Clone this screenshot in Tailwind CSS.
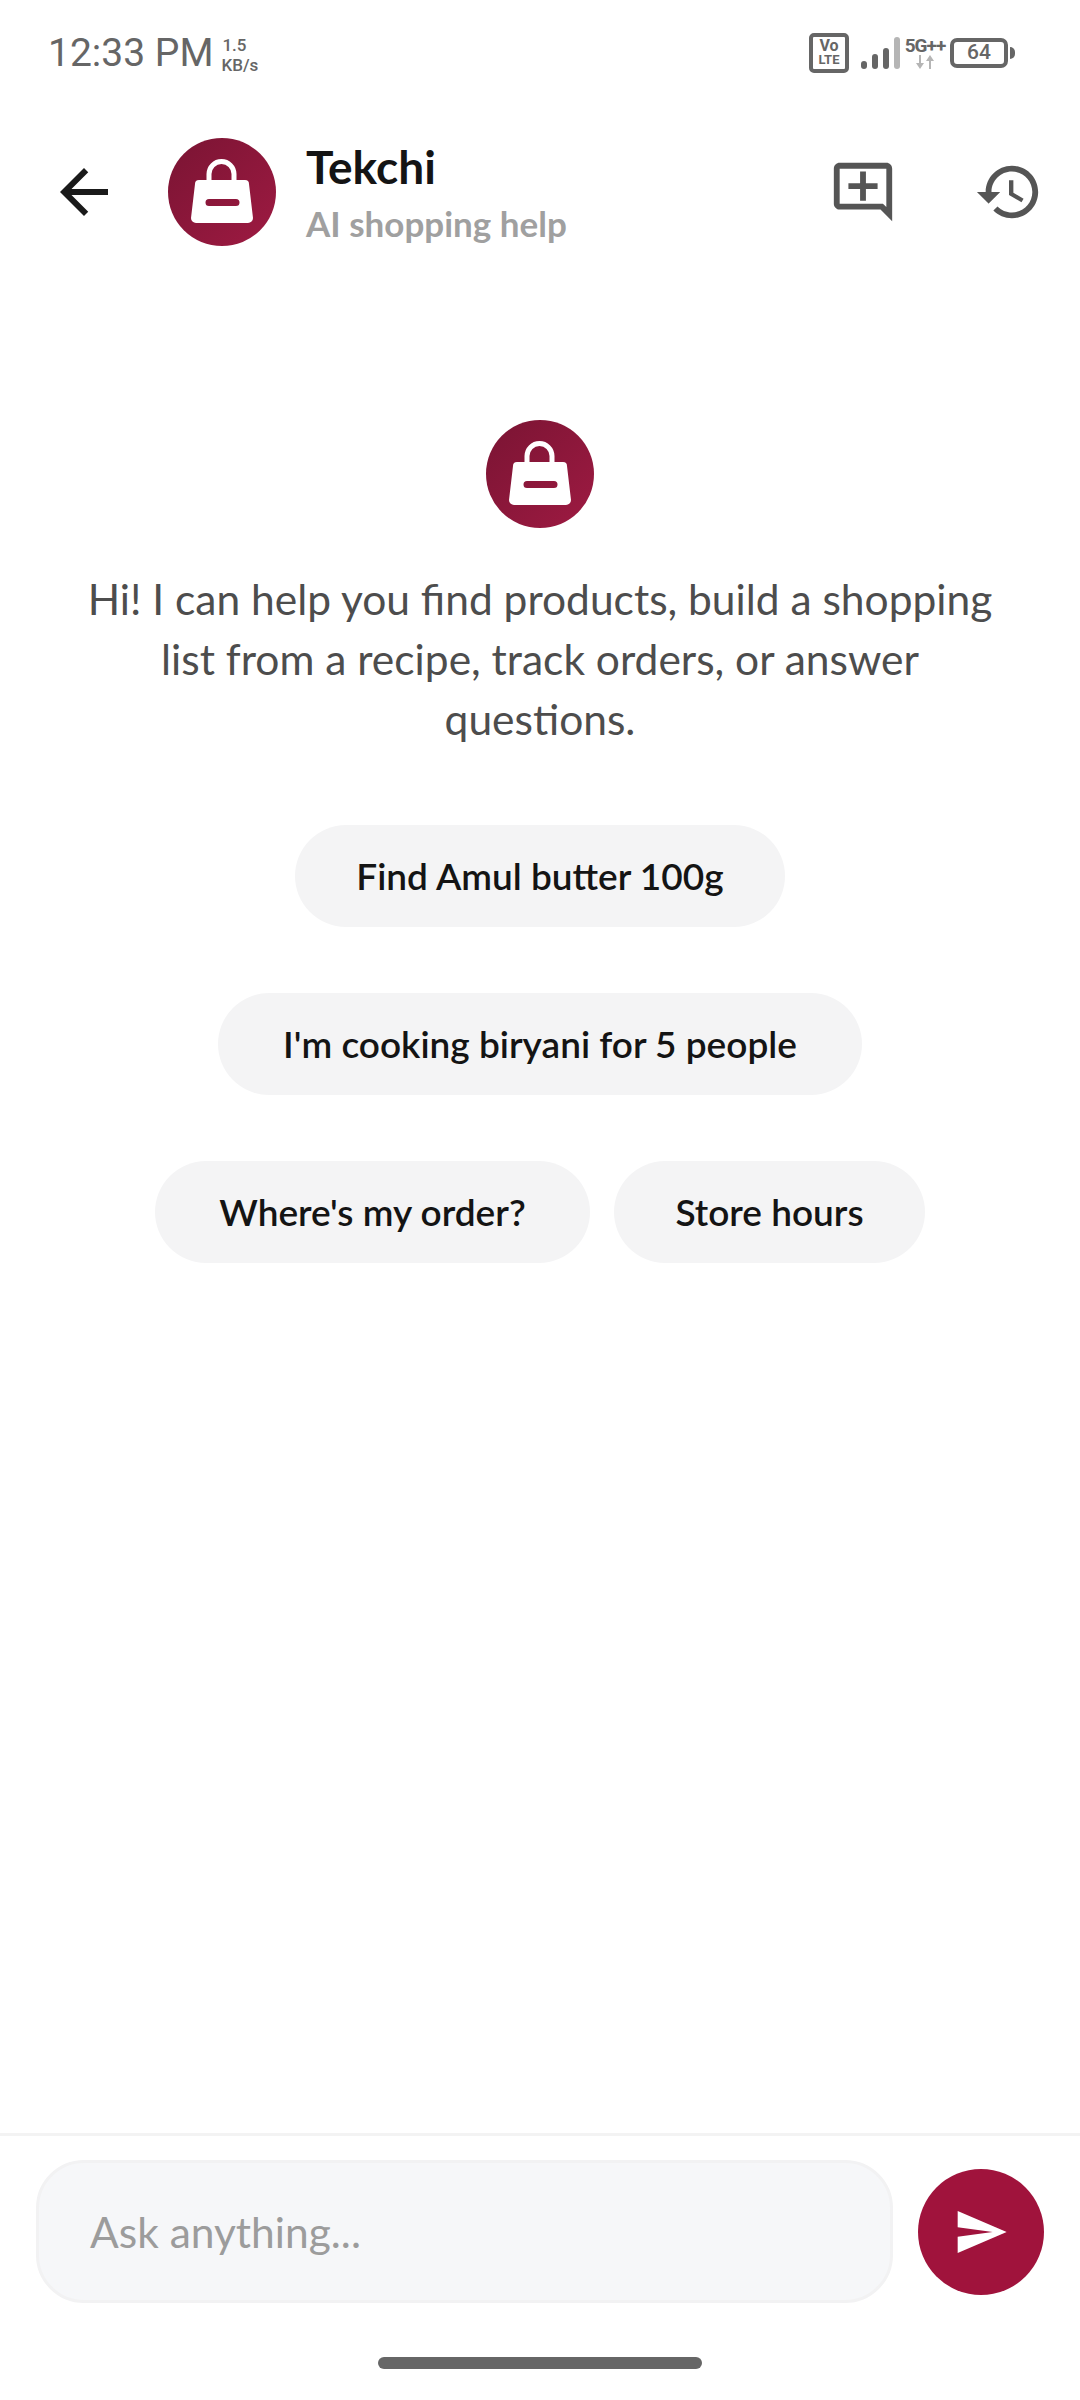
<!DOCTYPE html>
<html lang="en">
<head>
  <meta charset="UTF-8">
  <meta name="viewport" content="width=device-width, initial-scale=1.0">
  <title>Tekchi</title>
  <script src="https://cdn.jsdelivr.net/npm/@tailwindcss/browser@4"></script>
</head>
<body class="bg-white font-['Lato',sans-serif]">
  <div class="w-[1080px] h-[2400px] flex flex-col overflow-hidden">

    <!-- Status bar -->
    <div class="h-[105px] shrink-0 flex items-center justify-between pl-[48px] pr-[65px] font-['Roboto',sans-serif] text-[#666666]">
      <div class="flex items-center gap-[8px] mt-[2px]">
        <span class="text-[39px] leading-none">12:33 PM</span>
        <div class="flex flex-col items-start text-[17px] leading-[20px] font-medium pt-[3px]">
          <span class="pl-[1px]">1.5</span>
          <span>KB/s</span>
        </div>
      </div>
      <div class="flex items-center">
        <div class="w-[40px] h-[40px] border-[4px] border-[#666666] rounded-[5px] flex flex-col items-center justify-center font-bold">
          <span class="text-[16px] leading-[15px]">Vo</span>
          <span class="text-[13px] leading-[14px]">LTE</span>
        </div>
        <div class="flex items-end gap-[5px] ml-[12px] h-[32px]">
          <div class="w-[6px] h-[8px] rounded-full bg-[#666666]"></div>
          <div class="w-[6px] h-[15px] rounded-full bg-[#666666]"></div>
          <div class="w-[6px] h-[21px] rounded-full bg-[#666666]"></div>
          <div class="w-[6px] h-[32px] rounded-full bg-[#b5b5b5]"></div>
        </div>
        <div class="flex flex-col items-center w-[40px] ml-[5px]">
          <span class="text-[19px] leading-[18px] font-bold tracking-[-1px]">5G++</span>
          <svg class="w-[20px] h-[14px]" viewBox="0 0 20 14" fill="#b5b5b5"><path d="M4 0h2v8h3l-4 6-4-6h3zM14 14h2V6h3l-4-6-4 6h3z"/></svg>
        </div>
        <div class="w-[58px] h-[30px] ml-[5px] border-[4px] border-[#666666] rounded-[7px] flex items-center justify-center text-[21px] font-medium">64</div>
        <div class="w-[5px] h-[12px] ml-[2px] rounded-r-full bg-[#666666]"></div>
      </div>
    </div>

    <!-- Header -->
    <header class="h-[108px] shrink-0 mt-[33px] flex items-center pl-[48px] pr-[36px]">
      <svg class="w-[72px] h-[72px] text-[#1a1a1a]" viewBox="0 0 24 24" fill="currentColor"><path d="M20 11H7.83l5.59-5.59L12 4l-8 8 8 8 1.41-1.41L7.83 13H20v-2z"/></svg>
      <div class="ml-[48px] w-[108px] h-[108px] rounded-full bg-linear-to-br from-[#7a1433] to-[#9e1a42]">
        <svg class="w-full h-full" viewBox="0 0 108 108"><path fill="none" stroke="#ffffff" stroke-width="5" d="M41 43V36a12.5 12.5 0 0 1 25 0V43"/><path fill="#ffffff" fill-rule="evenodd" d="M31 42H77a4 4 0 0 1 4 4l4 34a5 5 0 0 1-5 5H28a5 5 0 0 1-5-5l4-34a4 4 0 0 1 4-4zM41 61a3.500 3.500 0 0 0 0 7H68a3.500 3.500 0 0 0 0-7z"/></svg>
      </div>
      <div class="ml-[30px] pt-[2px] flex-1 flex flex-col">
        <span class="text-[46px] leading-[50px] font-bold text-[#141414]">Tekchi</span>
        <span class="mt-[9px] text-[35px] leading-[44px] font-bold text-[#a0a0a0]">AI shopping help</span>
      </div>
      <svg class="w-[70px] h-[70px] text-[#555555]" viewBox="0 0 24 24" fill="currentColor"><path d="M22 4c0-1.100-.9-2-2-2H4c-1.100 0-2 .9-2 2v12c0 1.100.9 2 2 2h14l4 4V4zm-2 13.170L18.830 16H4V4h16v13.170zM13 5h-2v4H7v2h4v4h2v-4h4V9h-4V5z"/></svg>
      <svg class="w-[70px] h-[70px] ml-[76px] text-[#555555]" viewBox="0 0 24 24" fill="currentColor"><path d="M13 3c-4.970 0-9 4.030-9 9H1l3.890 3.890.07.14L9 12H6c0-3.870 3.130-7 7-7s7 3.130 7 7-3.130 7-7 7c-1.930 0-3.680-.79-4.940-2.060l-1.420 1.420C8.270 19.990 10.510 21 13 21c4.970 0 9-4.030 9-9s-4.030-9-9-9zm-1 5v5l4.280 2.540.72-1.210-3.500-2.080V8H12z"/></svg>
    </header>

    <!-- Empty chat -->
    <main class="flex-1 flex flex-col items-center pt-[174px]">
      <div class="w-[108px] h-[108px] rounded-full bg-linear-to-br from-[#7a1433] to-[#9e1a42]">
        <svg class="w-full h-full" viewBox="0 0 108 108"><path fill="none" stroke="#ffffff" stroke-width="5" d="M41 43V36a12.5 12.5 0 0 1 25 0V43"/><path fill="#ffffff" fill-rule="evenodd" d="M31 42H77a4 4 0 0 1 4 4l4 34a5 5 0 0 1-5 5H28a5 5 0 0 1-5-5l4-34a4 4 0 0 1 4-4zM41 61a3.500 3.500 0 0 0 0 7H68a3.500 3.500 0 0 0 0-7z"/></svg>
      </div>
      <p class="mt-[41px] w-[960px] text-center text-[42.5px] leading-[60px] text-[#4d4d4d]">Hi! I can help you find products, build a shopping<br>list from a recipe, track orders, or answer<br>questions.</p>
      <div class="mt-[76px] flex flex-col items-center gap-[66px] text-[37px] font-semibold text-[#141414]">
        <div class="h-[102px] w-[490px] flex items-center justify-center rounded-full bg-[#f4f4f5]">Find Amul butter 100g</div>
        <div class="h-[102px] w-[644px] flex items-center justify-center rounded-full bg-[#f4f4f5]">I'm cooking biryani for 5 people</div>
        <div class="flex gap-[24px]">
          <div class="h-[102px] w-[435px] flex items-center justify-center rounded-full bg-[#f4f4f5]">Where's my order?</div>
          <div class="h-[102px] w-[311px] flex items-center justify-center rounded-full bg-[#f4f4f5]">Store hours</div>
        </div>
      </div>
    </main>

    <!-- Composer -->
    <footer class="h-[267px] shrink-0 border-t-[3px] border-[#f3f3f3] pt-[24px] pl-[36px] pr-[36px]">
      <div class="flex items-center gap-[25px]">
        <div class="w-[858px] h-[143px] flex items-center pl-[51px] rounded-[48px] bg-[#f6f7f9] border-[3px] border-[#f2f2f3] text-[42.5px] text-[#9c9c9c]">Ask anything...</div>
        <div class="w-[126px] h-[126px] rounded-full bg-[#a0133c] flex items-center justify-center">
          <svg class="w-[56px] h-[56px]" viewBox="0 0 24 24" fill="#ffffff"><path d="M2.010 21L23 12 2.010 3 2 10l15 2-15 2z"/></svg>
        </div>
      </div>
      <div class="w-[324px] h-[12px] mx-auto mt-[54px] rounded-full bg-[#666666]"></div>
    </footer>
  </div>
</body>
</html>
